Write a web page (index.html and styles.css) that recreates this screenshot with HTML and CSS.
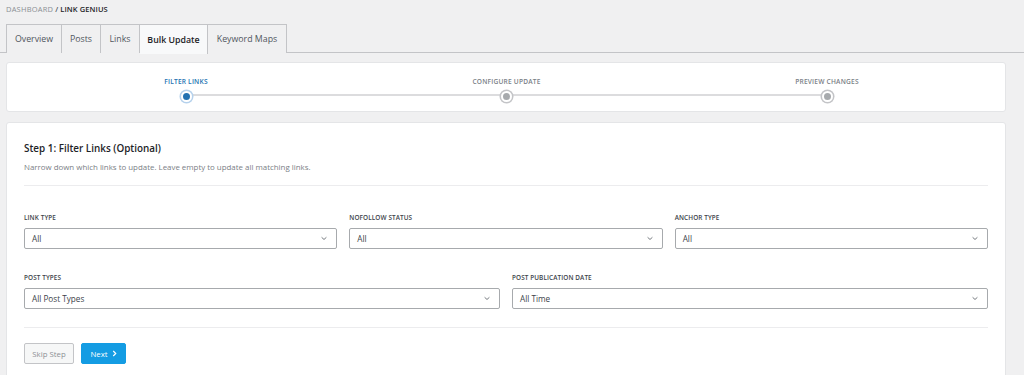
FILE: index.html
```html
<!DOCTYPE html>
<html>
<head>
<meta charset="utf-8">
<link rel="stylesheet" href="styles.css">
</head>
<body>
<div class="page">
  <div class="crumbs"><span class="crumb-muted">DASHBOARD</span> / <span class="crumb-current">LINK GENIUS</span></div>
  <nav class="tabs">
    <a class="tab">Overview</a>
    <a class="tab">Posts</a>
    <a class="tab">Links</a>
    <a class="tab active">Bulk Update</a>
    <a class="tab">Keyword Maps</a>
  </nav>
  <div class="content">
    <section class="card stepper-card">
      <div class="stepper">
        <div class="track"></div>
        <div class="step active"><span class="step-label">FILTER LINKS</span><span class="dot"></span></div>
        <div class="step"><span class="step-label">CONFIGURE UPDATE</span><span class="dot"></span></div>
        <div class="step"><span class="step-label">PREVIEW CHANGES</span><span class="dot"></span></div>
      </div>
    </section>
    <section class="card main-card">
      <h2 class="title">Step 1: Filter Links (Optional)</h2>
      <p class="desc">Narrow down which links to update. Leave empty to update all matching links.</p>
      <hr class="sep">
      <div class="row three">
        <div class="field"><label>LINK TYPE</label><div class="select"><span>All</span><svg class="chev" viewBox="0 0 10 6"><path d="M2 1.5 L5 4.2 L8 1.5" fill="none" stroke="#6f7479" stroke-width="1.2"/></svg></div></div>
        <div class="field"><label>NOFOLLOW STATUS</label><div class="select"><span>All</span><svg class="chev" viewBox="0 0 10 6"><path d="M2 1.5 L5 4.2 L8 1.5" fill="none" stroke="#6f7479" stroke-width="1.2"/></svg></div></div>
        <div class="field"><label>ANCHOR TYPE</label><div class="select"><span>All</span><svg class="chev" viewBox="0 0 10 6"><path d="M2 1.5 L5 4.2 L8 1.5" fill="none" stroke="#6f7479" stroke-width="1.2"/></svg></div></div>
      </div>
      <div class="row two">
        <div class="field"><label>POST TYPES</label><div class="select"><span>All Post Types</span><svg class="chev" viewBox="0 0 10 6"><path d="M2 1.5 L5 4.2 L8 1.5" fill="none" stroke="#6f7479" stroke-width="1.2"/></svg></div></div>
        <div class="field"><label>POST PUBLICATION DATE</label><div class="select"><span>All Time</span><svg class="chev" viewBox="0 0 10 6"><path d="M2 1.5 L5 4.2 L8 1.5" fill="none" stroke="#6f7479" stroke-width="1.2"/></svg></div></div>
      </div>
      <hr class="sep sep2">
      <div class="actions">
        <button class="btn btn-skip">Skip Step</button>
        <button class="btn btn-next">Next <svg class="next-chev" viewBox="0 0 6 8"><path d="M1.5 1 L4.5 4 L1.5 7" fill="none" stroke="#fff" stroke-width="1.4"/></svg></button>
      </div>
    </section>
  </div>
</div>
</body>
</html>
```

FILE: styles.css
```css
* { box-sizing: border-box; }
html, body { margin: 0; padding: 0; }
body {
  background: #f0f0f1;
  font-family: "Open Sans", "Noto Sans", sans-serif;
  color: #1d2327;
  width: 1024px;
  height: 375px;
  overflow: hidden;
}
.page { padding-top: 4px; }
.crumbs {
  padding-left: 6px;
  font-size: 7.5px;
  line-height: 10px;
  color: #50575e;
  font-weight: 600;
  letter-spacing: 0.1px;
}
.crumb-muted { color: #8a8f94; font-weight: 400; letter-spacing: 0.2px; }
.crumb-current { color: #1d2327; font-weight: 600; }
.tabs {
  display: flex;
  margin-top: 10px;
  padding-left: 6px;
  border-bottom: 1px solid #c3c4c7;
  height: 29px;
}
.tab {
  display: flex;
  align-items: center;
  justify-content: center;
  height: 29px;
  font-size: 8.8px;
  color: #50575e;
  border: 1px solid #c3c4c7;
  border-left: none;
  border-bottom: none;
  background: #f0f0f1;
  white-space: nowrap;
}
.tab:nth-child(1) { width: 56px; border-left: 1px solid #c3c4c7; }
.tab:nth-child(2) { width: 39px; }
.tab:nth-child(3) { width: 39px; }
.tab:nth-child(4) { width: 68px; }
.tab:nth-child(5) { width: 79px; }
.tab.active {
  background: #f8f9fa;
  color: #1d2327;
  font-weight: 600;
  height: 30px;
  margin-bottom: -1px;
}
.content {
  padding: 9px 18px 0 6px;
  display: flex;
  flex-direction: column;
  gap: 10px;
}
.card {
  background: #fff;
  border: 1px solid #e4e5e7;
  border-radius: 3px;
}
.stepper-card { height: 50px; }
.stepper {
  position: relative;
  display: flex;
  justify-content: space-between;
  padding: 14px 138px 0 139px;
}
.track {
  position: absolute;
  left: 179px;
  right: 179px;
  top: 31px;
  height: 2px;
  background: #dcdcde;
}
.step {
  position: relative;
  width: 80px;
  display: flex;
  flex-direction: column;
  align-items: center;
  gap: 5px;
}
.step-label {
  font-size: 6.6px;
  font-weight: 600;
  letter-spacing: 0.2px;
  color: #7a8086;
  white-space: nowrap;
  line-height: 9px;
}
.step.active .step-label { color: #2271b1; }
.dot {
  width: 11px;
  height: 11px;
  border-radius: 50%;
  background: #a7aaad;
  border: 2px solid #fff;
  box-shadow: 0 0 0 1.5px #c3c4c7;
}
.step.active .dot {
  background: #2271b1;
  box-shadow: 0 0 0 1.5px #b5d1ec;
}
.main-card {
  padding: 18px 17px 20px 17px;
  height: 270px;
}
.title {
  margin: 0;
  font-size: 9.9px;
  font-weight: 600;
  line-height: 14px;
  color: #1d2327;
}
.desc {
  margin: 7px 0 0;
  font-size: 7.9px;
  line-height: 11px;
  color: #7a8086;
}
.sep {
  border: none;
  border-top: 1px solid #ececee;
  margin: 12px 0 0;
}
.row { display: grid; gap: 12px; }
.row.three { grid-template-columns: 1fr 1fr 1fr; margin-top: 27px; }
.row.two { grid-template-columns: 1fr 1fr; margin-top: 24px; }
.field { display: flex; flex-direction: column; }
.field label {
  font-size: 6.4px;
  font-weight: 600;
  color: #3c434a;
  line-height: 9px;
  margin-bottom: 6px;
  letter-spacing: 0.1px;
}
.select {
  height: 21px;
  border: 1px solid #a7aaad;
  border-radius: 2px;
  display: flex;
  align-items: center;
  justify-content: space-between;
  padding: 0 8px 0 7px;
  font-size: 8.2px;
  color: #3c434a;
  background: #fff;
}
.chev { width: 8px; height: 5px; }
.sep2 { margin-top: 18px; }
.actions { display: flex; gap: 7px; margin-top: 15px; }
.btn {
  height: 21px;
  font-family: inherit;
  font-size: 7.8px;
  border-radius: 2px;
  padding: 0;
  display: flex;
  align-items: center;
  gap: 4px;
  white-space: nowrap;
}
.btn-skip {
  background: #f6f7f7;
  color: #8c8f94;
  border: 1px solid #c3c4c7;
  width: 50px;
  justify-content: center;
}
.btn-next {
  background: #149ce3;
  color: #fff;
  border: 1px solid #149ce3;
  width: 45px;
  justify-content: center;
}
.next-chev { width: 5px; height: 7px; }
```
